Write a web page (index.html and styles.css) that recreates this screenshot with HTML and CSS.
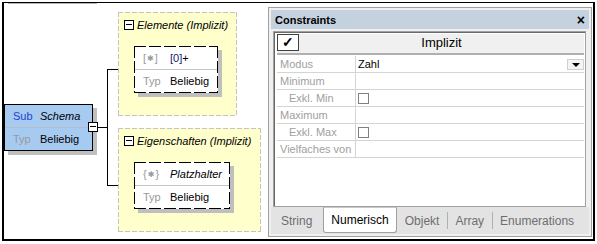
FILE: index.html
```html
<!DOCTYPE html>
<html lang="de">
<head>
    <meta charset="UTF-8">
    <title>Constraints</title>
    <link rel="stylesheet" href="styles.css">
</head>
<body>
    <div class="frame">
        <div class="edge-mark"></div>

        <div class="diagram">
            <!-- Verbindungslinien -->
            <div class="wire wire-out"></div>
            <div class="wire wire-trunk"></div>
            <div class="wire wire-top"></div>
            <div class="wire wire-bottom"></div>

            <div class="node schema">
                <div class="node-row"><span class="key sub">Sub</span><span class="val italic">Schema</span></div>
                <div class="node-row"><span class="key">Typ</span><span class="val">Beliebig</span></div>
                <span class="toggle schema-toggle"></span>
            </div>

            <div class="group group-elements">
                <div class="group-head"><span class="toggle"></span><span>Elemente (Implizit)</span></div>
                <div class="node dashed node-elements">
                    <div class="node-row"><span class="key">[<span class="star">✱</span>]</span><span class="val count">[0]<b>+</b></span></div>
                    <div class="node-row"><span class="key">Typ</span><span class="val">Beliebig</span></div>
                </div>
            </div>

            <div class="group group-props">
                <div class="group-head"><span class="toggle"></span><span>Eigenschaften (Implizit)</span></div>
                <div class="node dashed node-props">
                    <div class="node-row"><span class="key">{<span class="star">✱</span>}</span><span class="val italic">Platzhalter</span></div>
                    <div class="node-row"><span class="key">Typ</span><span class="val">Beliebig</span></div>
                </div>
            </div>
        </div>

        <div class="panel">
            <div class="panel-head">
                <span>Constraints</span>
                <span class="close">×</span>
            </div>

            <div class="grid">
                <div class="grid-top">
                    <span class="check">✓</span>
                    <span class="grid-title">Implizit</span>
                </div>
                <div class="prop"><span class="label">Modus</span><span class="value">Zahl<span class="drop"></span></span></div>
                <div class="prop"><span class="label">Minimum</span><span class="value"></span></div>
                <div class="prop"><span class="label indent">Exkl. Min</span><span class="value"><span class="box"></span></span></div>
                <div class="prop"><span class="label">Maximum</span><span class="value"></span></div>
                <div class="prop"><span class="label indent">Exkl. Max</span><span class="value"><span class="box"></span></span></div>
                <div class="prop"><span class="label">Vielfaches von</span><span class="value"></span></div>
            </div>

            <div class="tabs">
                <span class="tab">String</span>
                <span class="tab active">Numerisch</span>
                <span class="tab">Objekt</span>
                <span class="tab sep">Array</span>
                <span class="tab sep">Enumerations</span>
            </div>
        </div>
    </div>
</body>
</html>
```

FILE: styles.css
```css
* {
    box-sizing: border-box;
}

body {
    margin: 0;
    padding: 2px;
    font-family: "Liberation Sans", Arial, sans-serif;
    font-size: 11px;
    background: #fff;
}

.frame {
    position: relative;
    display: flex;
    width: 593px;
    height: 239px;
    border: 2px solid #000;
    border-top-width: 1px;
}

.edge-mark {
    position: absolute;
    top: 0;
    left: 4px;
    width: 89px;
    height: 1px;
    background: #b4b4b4;
}

/* Diagramm */
.diagram {
    position: relative;
    flex: 0 0 264px;
}

.wire {
    position: absolute;
    background: #000;
}

.wire-out { left: 93px; top: 124px; width: 11px; height: 1px; }
.wire-trunk { left: 103px; top: 66px; width: 1px; height: 117px; }
.wire-top { left: 103px; top: 66px; width: 28px; height: 1px; }
.wire-bottom { left: 103px; top: 182px; width: 28px; height: 1px; }

.node {
    background: #fff;
    box-shadow: 4px 4px 0 #bfbfbf;
}

.node-row {
    display: flex;
    align-items: center;
    height: 22px;
    padding-left: 8px;
}

.node-row + .node-row {
    border-top: 1px solid #c4c4c4;
}

.key {
    width: 27px;
    color: #9a9a9a;
}

.star {
    font-family: "DejaVu Sans", sans-serif;
    font-size: 8px;
    margin: 0 1px;
    position: relative;
    top: -1px;
}

.key.sub {
    color: #1f3fd0;
}

.val {
    color: #000;
}

.italic {
    font-style: italic;
}

.count {
    color: #102070;
}

.count b {
    font-weight: normal;
    color: #000;
}

.schema {
    position: absolute;
    left: 0;
    top: 101px;
    width: 89px;
    height: 47px;
    border: 1px solid #000;
    background: #a6caf0;
}

.schema .node-row + .node-row {
    border-top-color: #b9bcc8;
}

.toggle {
    position: relative;
    display: inline-block;
    width: 10px;
    height: 10px;
    border: 1px solid #000;
    background: #fff;
}

.toggle::before {
    content: "";
    position: absolute;
    left: 1px;
    right: 1px;
    top: 3px;
    height: 1px;
    background: #000;
}

.schema-toggle {
    position: absolute;
    left: 83px;
    top: 17px;
}

.group {
    position: absolute;
    left: 114px;
    width: 119px;
    height: 104px;
    padding: 7px 0 0 6px;
    background:
        repeating-linear-gradient(90deg, #c4c4c4 0 5px, transparent 5px 7px) top left / 100% 1px no-repeat,
        repeating-linear-gradient(90deg, #c4c4c4 0 5px, transparent 5px 7px) bottom left / 100% 1px no-repeat,
        repeating-linear-gradient(180deg, #c4c4c4 0 5px, transparent 5px 7px) top left / 1px 100% no-repeat,
        repeating-linear-gradient(180deg, #c4c4c4 0 5px, transparent 5px 7px) top right / 1px 100% no-repeat,
        #ffffcc;
}

.group-elements { top: 9px; }
.group-props { top: 125px; width: 143px; }

.group-head {
    display: flex;
    align-items: center;
    gap: 3px;
    height: 11px;
    font-style: italic;
    color: #000;
}

.dashed {
    width: 84px;
    height: 47px;
    margin: 16px 0 0 10px;
    padding: 1px;
    background:
        repeating-linear-gradient(90deg, #000 0 12px, #fff 12px 15px) top left / 100% 1px no-repeat,
        repeating-linear-gradient(90deg, #000 0 12px, #fff 12px 15px) bottom left / 100% 1px no-repeat,
        repeating-linear-gradient(180deg, #000 0 12px, #fff 12px 15px) top left / 1px 100% no-repeat,
        repeating-linear-gradient(180deg, #000 0 12px, #fff 12px 15px) top right / 1px 100% no-repeat,
        #fff;
}

.node-props {
    width: 96px;
}

/* Constraints-Fenster */
.panel {
    display: flex;
    flex-direction: column;
    width: 324px;
    height: 230px;
    margin-top: 4px;
    padding: 2px;
    border: 1px solid #a0a0a0;
    background: #f0f0f0;
}

.panel-head {
    display: flex;
    justify-content: space-between;
    align-items: center;
    height: 19px;
    padding: 0 4px 0 4px;
    background: #c4d2df;
    font-weight: bold;
}

.close {
    font-size: 14px;
    font-weight: bold;
    line-height: 1;
}

.grid {
    height: 176px;
    margin: 2px 3px 0 2px;
    padding: 2px 1px 0 3px;
    border: 1px solid #a0a0a0;
    box-shadow: inset 1px 1px 0 #6a6a6a;
    background: #fff;
}

.grid-top {
    display: flex;
    height: 21px;
    margin-bottom: 1px;
    border-bottom: 2px solid #b0b0b0;
    background: #f0f0f0;
}

.check {
    width: 22px;
    height: 17px;
    border: 1px solid #404040;
    background: #fff;
    text-align: center;
    font-size: 14px;
    font-weight: bold;
    line-height: 15px;
}

.grid-title {
    flex: 1;
    text-align: center;
    font-size: 13px;
    line-height: 17px;
}

.prop {
    display: flex;
    height: 17px;
    border-bottom: 1px solid #d4d4d4;
}

.label {
    width: 79px;
    padding-left: 3px;
    border-right: 1px solid #d4d4d4;
    color: #a0a0a0;
    line-height: 16px;
}

.label.indent {
    padding-left: 12px;
}

.value {
    flex: 1;
    display: flex;
    align-items: center;
    justify-content: space-between;
    padding-left: 2px;
    color: #000;
}

.box {
    width: 11px;
    height: 11px;
    border: 1px solid #808080;
    background: #fff;
}

.drop {
    position: relative;
    width: 17px;
    height: 11px;
    border: 1px solid #d0d0d0;
    background: #f4f4f4;
}

.drop::before {
    content: "";
    position: absolute;
    left: 4px;
    top: 3px;
    border-left: 4px solid transparent;
    border-right: 4px solid transparent;
    border-top: 4px solid #000;
}

.tabs {
    display: flex;
    align-items: stretch;
    height: 27px;
    background: #e3e3e3;
    font-size: 12px;
    color: #6e6e6e;
}

.tab {
    display: flex;
    align-items: center;
    padding: 0 8px 0 8px;
}

.tab:first-child {
    padding-left: 10px;
    padding-right: 11px;
}

.tab.active {
    padding: 0 7px;
    border: 1px solid #a0a0a0;
    border-top-color: #c8c8c8;
    border-radius: 0 0 3px 3px;
    margin-bottom: 1px;
    background: #fff;
    color: #000;
}

.tab.sep {
    position: relative;
}

.tab.sep::before {
    content: "";
    position: absolute;
    left: 0;
    top: 5px;
    bottom: 5px;
    width: 1px;
    background: #b0b0b0;
}
```
